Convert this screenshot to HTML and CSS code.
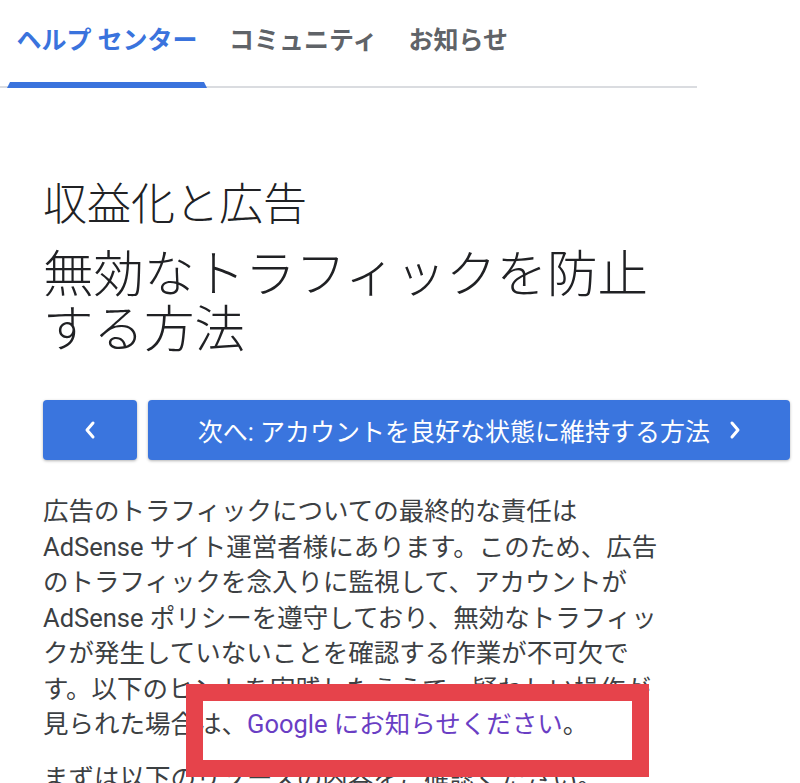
FILE: index.html
```html
<!DOCTYPE html>
<html lang="ja">
<head>
<meta charset="utf-8">
<title>無効なトラフィックを防止する方法</title>
<link rel="stylesheet" href="styles.css">
</head>
<body>
<nav class="tabs">
  <a class="tab tab-active" href="#">ヘルプ センター</a>
  <a class="tab" href="#">コミュニティ</a>
  <a class="tab" href="#">お知らせ</a>
</nav>
<main class="article">
  <div class="breadcrumb">収益化と広告</div>
  <h1 class="title">無効なトラフィックを防止する方法</h1>
  <div class="nav-buttons">
    <a class="btn btn-prev" href="#" aria-label="前へ">
      <svg width="14" height="20" viewBox="0 0 14 20"><path d="M10 3 L4 10 L10 17" fill="none" stroke="#fff" stroke-width="3" stroke-linecap="round" stroke-linejoin="round"/></svg>
    </a>
    <a class="btn btn-next" href="#">
      <span>次へ: アカウントを良好な状態に維持する方法</span>
      <svg width="14" height="20" viewBox="0 0 14 20"><path d="M4 3 L10 10 L4 17" fill="none" stroke="#fff" stroke-width="3" stroke-linecap="round" stroke-linejoin="round"/></svg>
    </a>
  </div>
  <p class="body-text">広告のトラフィックについての最終的な責任は AdSense サイト運営者様にあります。このため、広告のトラフィックを念入りに監視して、アカウントが AdSense ポリシーを遵守しており、無効なトラフィックが発生していないことを確認する作業が不可欠です。以下のヒントを実践したうえで、疑わしい操作が見られた場合は、<a class="link" href="#">Google にお知らせください</a>。</p>
  <p class="body-text">まずは以下のリソースの内容をご確認ください。</p>
</main>
<div class="highlight-box"></div>
</body>
</html>
```

FILE: styles.css
```css
html, body {
  margin: 0;
  padding: 0;
  background: #ffffff;
}

body {
  font-family: Roboto, "Noto Sans CJK JP", sans-serif;
  color: #202124;
  width: 800px;
  height: 783px;
  overflow: hidden;
  position: relative;
}

.tabs {
  display: flex;
  width: 690px;
  height: 86px;
  border-bottom: 2px solid #dadce0;
  padding-left: 7px;
  box-sizing: content-box;
  gap: 13px;
}

.tab {
  position: relative;
  display: flex;
  align-items: center;
  padding: 0 9px 10px;
  font-size: 25px;
  font-weight: 700;
  color: #5f6368;
  text-decoration: none;
  white-space: nowrap;
}

.tab-active {
  color: #3a73dd;
  width: 182px;
  justify-content: center;
}

.tab-active::after {
  content: "";
  position: absolute;
  left: 0;
  right: 0;
  bottom: -2px;
  height: 6px;
  background: #3a73dd;
  clip-path: polygon(3px 0, calc(100% - 3px) 0, 100% 100%, 0 100%);
}

.article {
  padding-left: 43px;
  padding-top: 89px;
}

.breadcrumb {
  font-size: 44px;
  font-weight: 300;
  line-height: 57px;
  color: #202124;
}

.title {
  margin: 13px 0 0;
  font-size: 50.5px;
  font-weight: 300;
  line-height: 55px;
  max-width: 640px;
  color: #202124;
}

.nav-buttons {
  display: flex;
  gap: 11px;
  margin-top: 43px;
  width: 747px;
}

.btn {
  height: 60px;
  display: flex;
  align-items: center;
  justify-content: center;
  background: #3a75de;
  border-radius: 4px;
  box-shadow: 0 1px 3px rgba(0, 0, 0, 0.3);
  color: #ffffff;
  text-decoration: none;
}

.btn-prev {
  width: 94px;
  flex: none;
}

.btn-next {
  flex: 1;
  gap: 18px;
  font-size: 25px;
  padding-left: 2px;
}

.body-text {
  margin: 34px 0 0;
  max-width: 630px;
  font-size: 25.5px;
  line-height: 35.5px;
  color: #3c4043;
}

.body-text + .body-text {
  margin-top: 18px;
}

.link {
  color: #6a3ec4;
  text-decoration: none;
}

.highlight-box {
  position: absolute;
  left: 186px;
  top: 684px;
  width: 463px;
  height: 93px;
  box-sizing: border-box;
  border: 17px solid #e6434b;
}
```
